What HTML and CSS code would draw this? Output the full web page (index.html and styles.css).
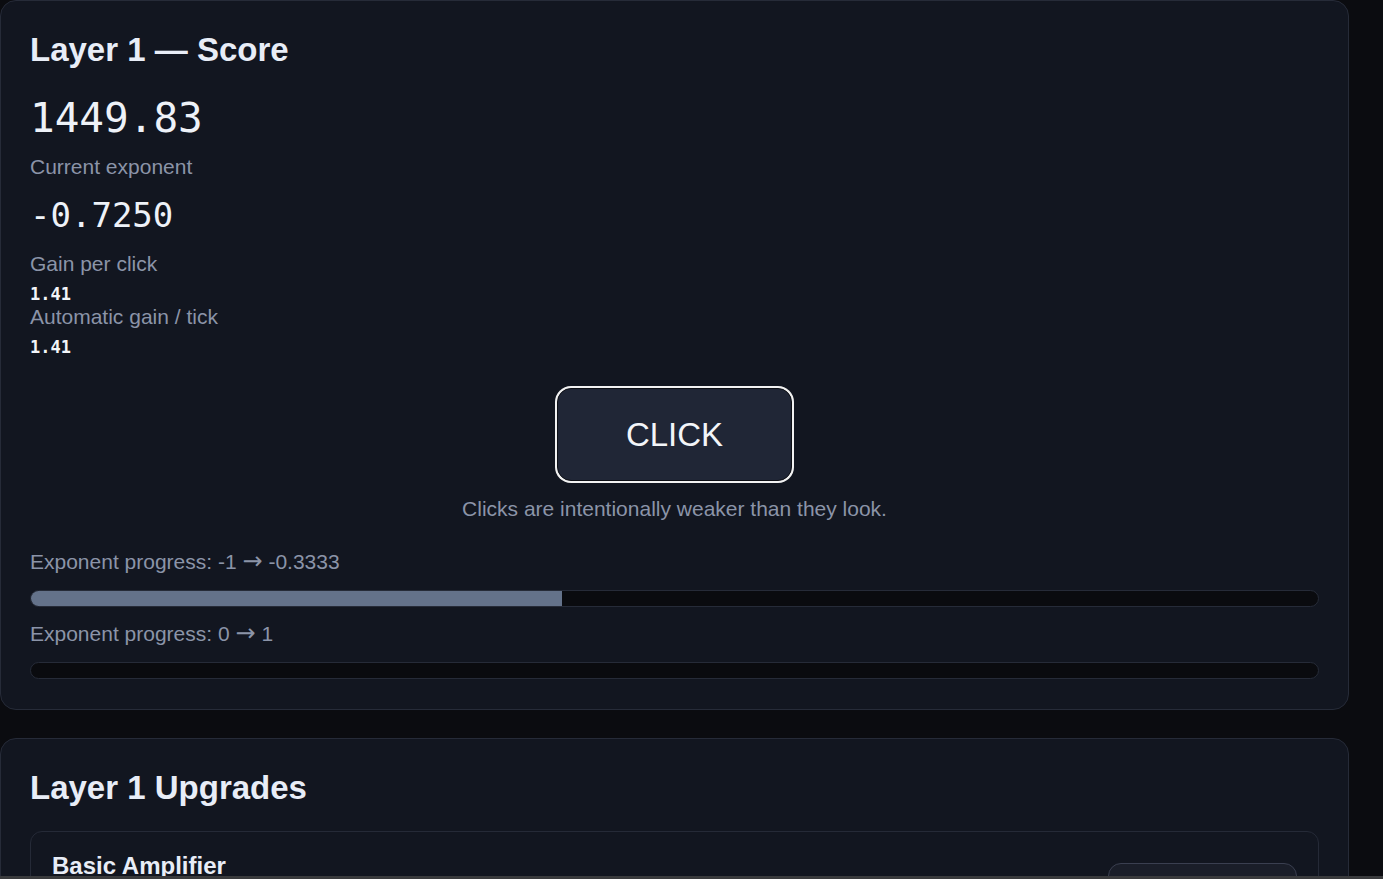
FILE: index.html
```html
<!DOCTYPE html>
<html lang="en">
<head>
<meta charset="utf-8">
<title>Layer 1</title>
<link rel="stylesheet" href="styles.css">
</head>
<body>
<main class="page">
  <section class="card">
    <h2 class="card-title">Layer 1 — Score</h2>
    <div class="score">1449.83</div>
    <div class="label label-first">Current exponent</div>
    <div class="exponent">-0.7250</div>
    <div class="label label-gap">Gain per click</div>
    <div class="value">1.41</div>
    <div class="label label-tight">Automatic gain / tick</div>
    <div class="value">1.41</div>
    <div class="click-wrap">
      <button class="click-btn" type="button">CLICK</button>
      <p class="note">Clicks are intentionally weaker than they look.</p>
    </div>
    <div class="label progress-label">Exponent progress: -1 <span class="arrow">→</span> -0.3333</div>
    <div class="bar"><div class="bar-fill" style="width: 41.25%"></div></div>
    <div class="label progress-label second">Exponent progress: 0 <span class="arrow">→</span> 1</div>
    <div class="bar"><div class="bar-fill" style="width: 0%"></div></div>
  </section>

  <section class="card card-upgrades">
    <h2 class="card-title upgrades-title">Layer 1 Upgrades</h2>
    <div class="upgrade">
      <div class="upgrade-info">
        <div class="upgrade-name">Basic Amplifier</div>
        <div class="upgrade-desc">Increases gain per click.</div>
        <div class="upgrade-cost">Cost: 10</div>
      </div>
      <button class="buy-btn" type="button">Buy</button>
    </div>
  </section>
</main>
<div class="bottom-strip"></div>
</body>
</html>
```
FILE: styles.css
```css
html {
  overflow: hidden;
}

body {
  margin: 0;
  background: #0b0c10;
  color: #e6ebf5;
  font-family: "Liberation Sans", Arial, sans-serif;
}

.page {
  width: 1349px;
}

.card {
  background: #121620;
  border: 1px solid #262b38;
  border-radius: 16px;
  padding: 30px 29px 30px;
}

.card-title {
  margin: 0 0 25px;
  font-size: 33px;
  line-height: 38px;
  font-weight: 700;
  color: #e8edf7;
}

.score {
  font-family: "DejaVu Sans Mono", monospace;
  font-size: 41px;
  line-height: 48px;
  color: #eef2f8;
}

.exponent {
  margin-top: 17px;
  font-family: "DejaVu Sans Mono", monospace;
  font-size: 34px;
  line-height: 39px;
  color: #eef2f8;
}

.label {
  font-size: 21px;
  line-height: 24px;
  color: #8b94a8;
}

.arrow {
  font-family: "DejaVu Sans", sans-serif;
  font-size: 24px;
  line-height: 0;
}

.label-first {
  margin-top: 13px;
}

.label-gap {
  margin-top: 17px;
}

.label-tight {
  margin-top: 1px;
}

.value {
  margin-top: 8px;
  font-family: "DejaVu Sans Mono", monospace;
  font-weight: 700;
  font-size: 17px;
  line-height: 20px;
  color: #f3f5f9;
}

.click-wrap {
  margin-top: 29px;
  display: flex;
  flex-direction: column;
  align-items: center;
}

.click-btn {
  margin: 2px 0 0;
  width: 235px;
  height: 93px;
  background: #202636;
  border: 1px solid #0d0f15;
  border-radius: 14px;
  box-shadow: 0 0 0 2px #f2f2f2;
  color: #f3f5f9;
  font-family: "Liberation Sans", Arial, sans-serif;
  font-size: 33px;
  line-height: 38px;
  padding: 0;
}

.note {
  margin: 16px 0 0;
  font-size: 21px;
  line-height: 24px;
  color: #8b94a8;
}

.progress-label {
  margin-top: 29px;
}

.progress-label.second {
  margin-top: 15px;
}

.bar {
  margin-top: 16px;
  height: 15px;
  border: 1px solid #262b38;
  border-radius: 9px;
  background: #0a0b0f;
  overflow: hidden;
}

.bar-fill {
  height: 100%;
  background: #64728a;
}

.card-upgrades {
  margin-top: 28px;
  padding-bottom: 40px;
}

.upgrades-title {
  margin-bottom: 24px;
}

.upgrade {
  display: flex;
  justify-content: space-between;
  align-items: flex-start;
  border: 1px solid #252a37;
  border-radius: 12px;
  padding: 21px 21px 20px;
  background: #121620;
}

.upgrade-name {
  font-size: 24px;
  line-height: 26px;
  font-weight: 700;
  color: #e8edf7;
}

.upgrade-desc,
.upgrade-cost {
  margin-top: 8px;
  font-size: 21px;
  line-height: 24px;
  color: #8b94a8;
}

.buy-btn {
  margin-top: 10px;
  width: 189px;
  height: 52px;
  background: #1a1e29;
  border: 1px solid #3a3f50;
  border-radius: 13px;
  color: #e8edf7;
  font-family: "Liberation Sans", Arial, sans-serif;
  font-size: 21px;
}

.bottom-strip {
  position: fixed;
  left: 0;
  right: 0;
  bottom: 0;
  height: 3px;
  background: #3a3b3d;
}
```
